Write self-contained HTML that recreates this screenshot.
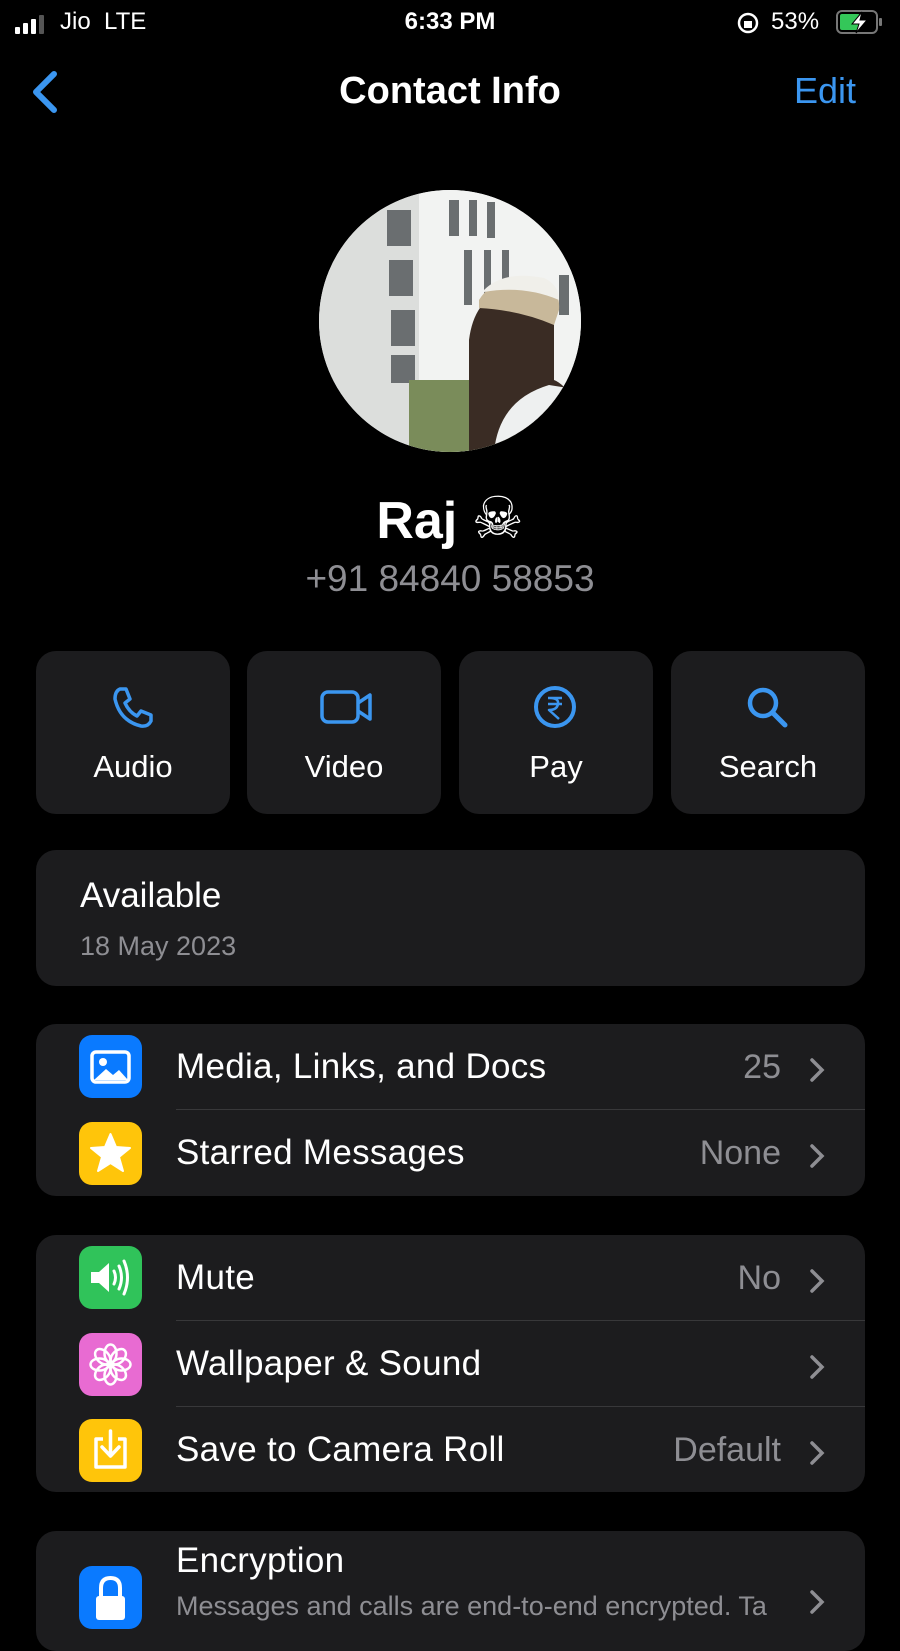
<!DOCTYPE html>
<html><head><meta charset="utf-8"><style>
*{margin:0;padding:0;box-sizing:border-box}
body{width:900px;height:1600px;background:#000;color:#fff;font-family:"Liberation Sans","Noto Sans CJK JP",sans-serif;overflow:hidden;position:relative}
.a{position:absolute}
.card{position:absolute;left:36px;width:829px;background:#1c1c1e;border-radius:20px}
.btn{position:absolute;top:651px;width:194px;height:163px;background:#1c1c1e;border-radius:20px}
.btn svg{position:absolute;left:72px;top:32px}
.btn span{position:absolute;left:0;right:0;top:98px;text-align:center;font-size:31px;font-weight:500}
.ic{position:absolute;left:43px;width:63px;height:63px;border-radius:13px}
.lbl{position:absolute;left:140px;font-size:35px;letter-spacing:0.3px}
.val{position:absolute;right:84px;font-size:34px;color:#8e8e93}
.chev{position:absolute;right:40px}
.sep{position:absolute;left:140px;right:0;height:1px;background:#38383a}
</style></head><body>
<!-- status bar -->
<div class="a" style="left:15px;top:14px">
<svg width="30" height="20"><rect x="0" y="13" width="5" height="7" rx="1" fill="#fff"/><rect x="8" y="9" width="5" height="11" rx="1" fill="#fff"/><rect x="16" y="5" width="5" height="15" rx="1" fill="#fff"/><rect x="24" y="1" width="5" height="19" rx="1" fill="#555"/></svg></div>
<div class="a" style="left:60px;top:8px;font-size:24px;font-weight:500">Jio&nbsp;&nbsp;LTE</div>
<div class="a" style="left:0;right:0;top:8px;text-align:center;font-size:24px;font-weight:bold">6:33 PM</div>
<div class="a" style="left:736px;top:10px"><svg width="26" height="26"><circle cx="12" cy="13" r="9" fill="none" stroke="#fff" stroke-width="2.5"/><rect x="8" y="11" width="8" height="7" fill="#fff"/></svg></div>
<div class="a" style="left:771px;top:8px;font-size:24px;font-weight:500">53%</div>
<div class="a" style="left:836px;top:10px"><svg width="50" height="26"><rect x="1" y="1" width="40" height="22" rx="5" fill="none" stroke="#777" stroke-width="2"/><rect x="4" y="4" width="20" height="16" rx="2" fill="#34c759"/><path d="M26 2 L16 14 H23 L20 23 L31 10 H24 Z" fill="#fff" stroke="#000" stroke-width="1"/><rect x="43" y="8" width="3" height="8" rx="1" fill="#777"/></svg></div>
<!-- nav -->
<div class="a" style="left:28px;top:70px"><svg width="32" height="44"><path d="M26 4 L8 22 L26 40" fill="none" stroke="#3b96f0" stroke-width="6" stroke-linecap="round" stroke-linejoin="round"/></svg></div>
<div class="a" style="left:0;right:0;top:70px;text-align:center;font-size:38px;font-weight:bold">Contact Info</div>
<div class="a" style="right:44px;top:70px;font-size:36px;color:#3b96f0">Edit</div>
<!-- avatar -->
<div class="a" style="left:319px;top:190px;width:262px;height:262px;border-radius:50%;overflow:hidden;background:#e8eaea">
<svg width="262" height="262">
<rect x="0" y="0" width="100" height="262" fill="#dcdedc"/>
<rect x="100" y="0" width="162" height="262" fill="#f2f3f2"/>
<g fill="#6a6e70"><rect x="68" y="20" width="24" height="36"/><rect x="70" y="70" width="24" height="36"/><rect x="72" y="120" width="24" height="36"/><rect x="72" y="165" width="24" height="28"/><rect x="130" y="10" width="10" height="36"/><rect x="150" y="10" width="8" height="36"/><rect x="168" y="12" width="8" height="36"/><rect x="145" y="60" width="8" height="55"/><rect x="165" y="60" width="7" height="55"/><rect x="183" y="60" width="7" height="55"/><rect x="240" y="85" width="10" height="40"/></g>
<rect x="90" y="190" width="100" height="72" fill="#7a8c5a"/>
<path d="M150 262 L150 150 Q155 110 185 100 Q220 95 235 130 L235 190 Q260 200 262 262 Z" fill="#3a2c24"/>
<path d="M175 262 Q180 210 230 195 L262 200 L262 262 Z" fill="#eef0f0"/>
<path d="M160 110 Q175 85 215 88 Q242 95 240 120 L235 135 Q200 120 160 118 Z" fill="#c8b89a"/>
<path d="M165 100 Q185 80 225 88 Q240 95 240 110 Q205 95 165 102Z" fill="#f0efea"/>
</svg></div>
<div class="a" style="left:0;right:0;top:484px;text-align:center;font-size:52px;font-weight:bold">Raj <span style="font-family:'DejaVu Sans',sans-serif;font-weight:normal;font-size:58px">☠</span></div>
<div class="a" style="left:0;right:0;top:558px;text-align:center;font-size:37px;color:#8e8e93">+91 84840 58853</div>
<!-- buttons -->
<div class="btn" style="left:36px"><svg width="50" height="50"><path d="M12 6 L18 6 L22 16 L17 20 Q21 29 29 33 L33 28 L43 32 L43 38 Q40 44 33 43 Q12 38 7 16 Q7 8 12 6Z" fill="none" stroke="#3b96f0" stroke-width="3.5" stroke-linejoin="round"/></svg><span>Audio</span></div>
<div class="btn" style="left:247px"><svg width="56" height="50"><rect x="3" y="9" width="36" height="30" rx="6" fill="none" stroke="#3b96f0" stroke-width="3.5"/><path d="M39 20 L51 12 V36 L39 28" fill="none" stroke="#3b96f0" stroke-width="3.5" stroke-linejoin="round"/></svg><span>Video</span></div>
<div class="btn" style="left:459px"><svg width="50" height="50"><circle cx="24" cy="24" r="19" fill="none" stroke="#3b96f0" stroke-width="4"/><path d="M17 15 H31 M17 21 H31 M19 15 Q28 15 27 21 Q26 27 18 27 L28 36" fill="none" stroke="#3b96f0" stroke-width="2.5" stroke-linejoin="round"/></svg><span>Pay</span></div>
<div class="btn" style="left:671px"><svg width="50" height="50"><circle cx="20" cy="20" r="13" fill="none" stroke="#3b96f0" stroke-width="4.5"/><path d="M30 30 L42 42" stroke="#3b96f0" stroke-width="5" stroke-linecap="round"/></svg><span>Search</span></div>
<!-- available -->
<div class="card" style="top:850px;height:136px">
<div class="a" style="left:44px;top:26px;font-size:35px">Available</div>
<div class="a" style="left:44px;top:81px;font-size:27px;color:#8e8e93">18 May 2023</div>
</div>
<!-- media card -->
<div class="card" style="top:1024px;height:172px">
<div class="ic" style="top:11px;background:#0a7aff"><svg width="63" height="63"><rect x="13" y="17" width="37" height="30" rx="4" fill="none" stroke="#fff" stroke-width="3.5"/><circle cx="24" cy="27" r="4" fill="#fff"/><path d="M15 45 L27 34 L34 40 L40 35 L49 45Z" fill="#fff"/></svg></div>
<div class="lbl" style="top:23px">Media, Links, and Docs</div>
<div class="val" style="top:24px">25</div>
<svg class="chev" style="top:33px" width="16" height="26"><path d="M3 3 L13 13 L3 23" fill="none" stroke="#8e8e93" stroke-width="3.5" stroke-linecap="round"/></svg>
<div class="sep" style="top:85px"></div>
<div class="ic" style="top:98px;background:#ffc50a"><svg width="63" height="63"><path d="M31.5 12 L37 25 L51 26 L40 35 L44 49 L31.5 41 L19 49 L23 35 L12 26 L26 25Z" fill="#fff" stroke="#fff" stroke-width="2" stroke-linejoin="round"/></svg></div>
<div class="lbl" style="top:109px">Starred Messages</div>
<div class="val" style="top:110px">None</div>
<svg class="chev" style="top:119px" width="16" height="26"><path d="M3 3 L13 13 L3 23" fill="none" stroke="#8e8e93" stroke-width="3.5" stroke-linecap="round"/></svg>
</div>
<!-- mute card -->
<div class="card" style="top:1235px;height:257px">
<div class="ic" style="top:11px;background:#30c35a"><svg width="63" height="63"><path d="M12 26 H20 L30 17 V46 L20 37 H12Z" fill="#fff"/><path d="M35 25 Q38 31.5 35 38 M40 20 Q45 31.5 40 43 M45 15 Q52 31.5 45 48" fill="none" stroke="#fff" stroke-width="3" stroke-linecap="round"/></svg></div>
<div class="lbl" style="top:23px">Mute</div>
<div class="val" style="top:24px">No</div>
<svg class="chev" style="top:33px" width="16" height="26"><path d="M3 3 L13 13 L3 23" fill="none" stroke="#8e8e93" stroke-width="3.5" stroke-linecap="round"/></svg>
<div class="sep" style="top:85px"></div>
<div class="ic" style="top:98px;background:#e86bd2"><svg width="63" height="63"><g fill="none" stroke="#fff" stroke-width="2.5" transform="translate(31.5 31.5)"><ellipse cx="0" cy="-11" rx="6" ry="9"/><ellipse cx="0" cy="-11" rx="6" ry="9" transform="rotate(45)"/><ellipse cx="0" cy="-11" rx="6" ry="9" transform="rotate(90)"/><ellipse cx="0" cy="-11" rx="6" ry="9" transform="rotate(135)"/><ellipse cx="0" cy="-11" rx="6" ry="9" transform="rotate(180)"/><ellipse cx="0" cy="-11" rx="6" ry="9" transform="rotate(225)"/><ellipse cx="0" cy="-11" rx="6" ry="9" transform="rotate(270)"/><ellipse cx="0" cy="-11" rx="6" ry="9" transform="rotate(315)"/></g><circle cx="31.5" cy="31.5" r="3" fill="#fff"/></svg></div>
<div class="lbl" style="top:109px">Wallpaper &amp; Sound</div>
<svg class="chev" style="top:119px" width="16" height="26"><path d="M3 3 L13 13 L3 23" fill="none" stroke="#8e8e93" stroke-width="3.5" stroke-linecap="round"/></svg>
<div class="sep" style="top:171px"></div>
<div class="ic" style="top:184px;background:#ffc50a"><svg width="63" height="63"><path d="M24 20 H17 V48 H46 V20 H39" fill="none" stroke="#fff" stroke-width="3.5" stroke-linejoin="round"/><path d="M31.5 12 V36 M23 28 L31.5 37 L40 28" fill="none" stroke="#fff" stroke-width="3.5" stroke-linecap="round" stroke-linejoin="round"/></svg></div>
<div class="lbl" style="top:195px">Save to Camera Roll</div>
<div class="val" style="top:196px">Default</div>
<svg class="chev" style="top:205px" width="16" height="26"><path d="M3 3 L13 13 L3 23" fill="none" stroke="#8e8e93" stroke-width="3.5" stroke-linecap="round"/></svg>
</div>
<!-- encryption -->
<div class="card" style="top:1531px;height:120px">
<div class="ic" style="top:35px;background:#0a7aff"><svg width="63" height="63"><path d="M22 30 V22 Q22 12 31.5 12 Q41 12 41 22 V30" fill="none" stroke="#fff" stroke-width="4"/><rect x="17" y="30" width="29" height="24" rx="3" fill="#fff"/></svg></div>
<div class="lbl" style="top:10px">Encryption</div>
<div class="a" style="left:140px;top:60px;font-size:27px;color:#8e8e93;white-space:nowrap">Messages and calls are end-to-end encrypted. Ta</div>
<svg class="chev" style="top:58px" width="16" height="26"><path d="M3 3 L13 13 L3 23" fill="none" stroke="#8e8e93" stroke-width="3.5" stroke-linecap="round"/></svg>
</div>
</body></html>
